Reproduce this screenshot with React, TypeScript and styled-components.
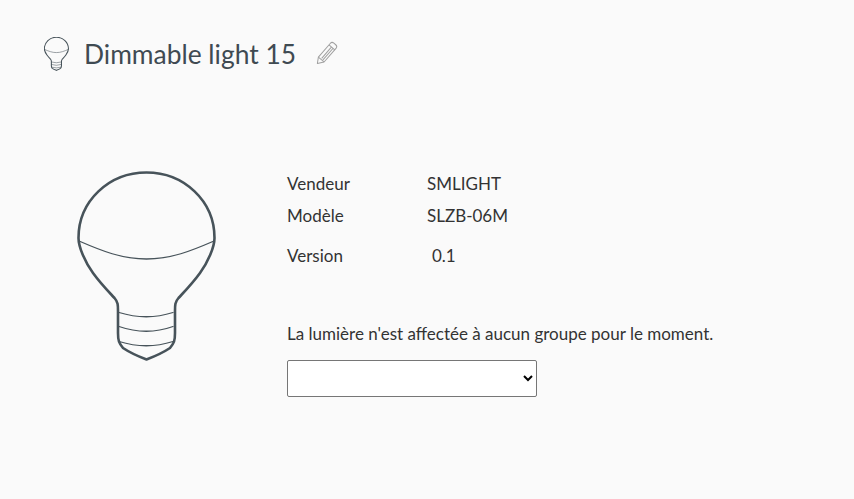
import React from 'react';
import styled, { createGlobalStyle } from 'styled-components';

const GlobalStyle = createGlobalStyle`
    html,
    body {
        margin: 0;
        padding: 0;
        background-color: #fafafa;
    }
`;

const Page = styled.div`
    width: 854px;
    height: 499px;
    box-sizing: border-box;
    padding: 36px 0 0 44px;
    background-color: #fafafa;
    color: #333333;
    font-family: Lato, 'Liberation Sans', sans-serif;
    font-size: 17px;
    overflow: hidden;
`;

const Header = styled.header`
    display: flex;
    align-items: center;
    height: 36px;
`;

const Title = styled.h1`
    margin: 0 0 0 15px;
    font-size: 26.4px;
    font-weight: 400;
    line-height: 36px;
    color: #3f4a52;
`;

const EditButton = styled.button`
    display: flex;
    margin: 0 0 2px 20px;
    padding: 0;
    border: 0;
    background: none;
`;

const Content = styled.div`
    display: flex;
    margin: 96px 0 0 33px;
`;

const BulbColumn = styled.div`
    padding-top: 3px;
`;

const Details = styled.div`
    display: flex;
    flex-direction: column;
    margin-left: 70px;
`;

const InfoRow = styled.div<{ $height: number }>`
    display: flex;
    align-items: center;
    height: ${(props) => props.$height}px;
    line-height: 20px;
`;

const Label = styled.span`
    width: 140px;
`;

const Value = styled.span<{ $indent?: boolean }>`
    padding-left: ${(props) => (props.$indent ? 5 : 0)}px;
`;

const GroupText = styled.p`
    margin: 44px 0 0;
    line-height: 20px;
`;

const GroupSelect = styled.select`
    display: block;
    width: 250px;
    height: 37px;
    margin-top: 16px;
    border: 1px solid #767676;
    border-radius: 2px;
    background-color: #ffffff;
    font-family: Lato, 'Liberation Sans', sans-serif;
    font-size: 17px;
`;

const BulbIcon = ({ width, height, stroke }: { width: number; height: number; stroke: number }) => (
    <svg width={width} height={height} viewBox="0 0 140 192" fill="none" stroke="#47535a" strokeLinecap="round" strokeLinejoin="round">
        <path
            strokeWidth={stroke}
            d="M1.5 67C1.5 30 32 1.5 69.5 1.5C107 1.5 137.5 30 137.5 67C137.5 76 131 91 123 102C115 113 108 120 101.5 127C98 131 98 134 98 140V162C98 170 97 172 93 177C84 183 76 186 69.5 188.5C63 186 55 183 46 177C42 172 41 170 41 162V140C41 134 41 131 37.5 127C31 120 24 113 16 102C8 91 1.5 76 1.5 67Z"
        />
        <g strokeWidth={stroke * 0.5}>
            <path d="M2 70C25 80 45 88 69.5 88C94 88 114 80 137 70" />
            <path d="M42 141.5Q69.5 150 96 141.5" />
            <path d="M42 155.5Q69.5 165 96 155.5" />
            <path d="M42 170.5Q69.5 179 96 170.5" />
        </g>
    </svg>
);

const PencilIcon = () => (
    <svg width="22" height="24" viewBox="0 0 24 26" fill="none" stroke="#a0a0a0" strokeWidth="1.1" strokeLinejoin="round">
        <path d="M1.5 24.5L2.6 17.5L15.5 2.6C16.6 1.3 18.2 1.2 19.5 2.3L21.5 4C22.8 5.1 22.9 6.7 21.8 8L8.8 22.8Z" />
        <path d="M2.6 17.5L8.8 22.8M14.2 4.1L20.5 9.5M6.2 18.8L17 6.4M7.6 20.5L18.7 7.8" />
    </svg>
);

const App = () => (
    <Page>
        <GlobalStyle />
        <Header>
            <BulbIcon width={25} height={34} stroke={6} />
            <Title>Dimmable light 15</Title>
            <EditButton>
                <PencilIcon />
            </EditButton>
        </Header>
        <Content>
            <BulbColumn>
                <BulbIcon width={140} height={192} stroke={2.6} />
            </BulbColumn>
            <Details>
                <InfoRow $height={32}>
                    <Label>Vendeur</Label>
                    <Value>SMLIGHT</Value>
                </InfoRow>
                <InfoRow $height={32}>
                    <Label>Modèle</Label>
                    <Value>SLZB-06M</Value>
                </InfoRow>
                <InfoRow $height={48}>
                    <Label>Version</Label>
                    <Value $indent>0.1</Value>
                </InfoRow>
                <GroupText>La lumière n'est affectée à aucun groupe pour le moment.</GroupText>
                <GroupSelect />
            </Details>
        </Content>
    </Page>
);

export default App;
